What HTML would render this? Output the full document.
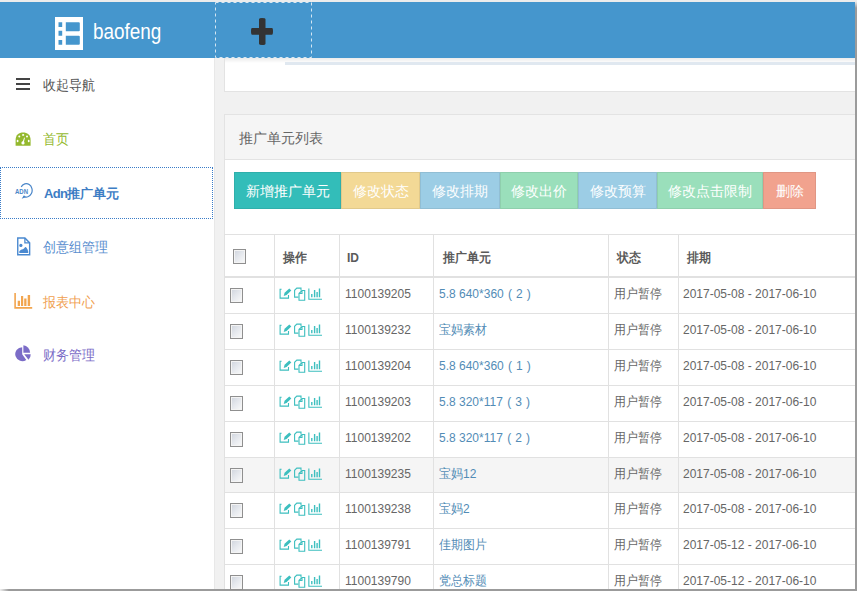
<!DOCTYPE html>
<html><head><meta charset="utf-8">
<style>
*{margin:0;padding:0;box-sizing:border-box}
html,body{width:857px;height:591px;overflow:hidden;background:#fff;font-family:"Liberation Sans",sans-serif;color:#666}
div,svg{position:absolute}
.t13{font-size:13px;line-height:16px;white-space:nowrap}
.t12{font-size:12px;line-height:14px;white-space:nowrap}
.sy{transform:scaleY(1.1);transform-origin:0 9px}
.sc{transform:scaleY(1.09);transform-origin:0 12px}
.sc13{transform:scaleY(1.08);transform-origin:0 13px}
.t14{font-size:14px;line-height:16px;white-space:nowrap}
.btn{top:172px;height:37px;color:#fff;font-size:14px;line-height:39px;text-align:center;white-space:nowrap;box-shadow:inset 0 0 0 1px rgba(0,0,0,0.07)}
.cb{width:13px;height:15px;border:1px solid #8f8f8f;box-shadow:inset 0 0 0 1px #f4f4f4;background:linear-gradient(135deg,#cfd4dd 0%,#e6e9ee 50%,#fafafa 100%)}
.hl{height:1px;background:#e1e1e1}
.vl{width:1px;background:#e1e1e1}
</style></head><body>

<div style="left:0;top:0;width:857px;height:2px;background:#ececec"></div>
<div style="left:0;top:2px;width:855px;height:56px;background:#4596cd"></div>
<svg style="left:55px;top:17px" width="28" height="33" viewBox="0 0 28 33"><path fill="#fff" fill-rule="evenodd" d="M0 0H28V33H0Z M3.5 5.3H7.2V9.9H3.5Z M3.5 13.8H7.2V18.8H3.5Z M3.5 23.1H7.2V27.7H3.5Z M10.8 5.3H23.8Q24.8 5.3 24.8 6.3V13.2Q24.8 14.2 23.8 14.2H10.8Z M10.8 18.8H23.8Q24.8 18.8 24.8 19.8V26.7Q24.8 27.7 23.8 27.7H10.8Z"/></svg>
<div style="left:93px;top:18.5px;font-size:22px;line-height:26px;color:#fff;transform:scaleX(0.86);transform-origin:0 0">baofeng</div>
<svg style="left:0;top:0" width="857" height="60"><rect x="215.5" y="2.5" width="96" height="55" fill="none" stroke="#d5e6f2" stroke-width="1" stroke-dasharray="3 3"/></svg>
<svg style="left:251px;top:18px" width="22" height="27" viewBox="0 0 22 27"><path fill="#333" d="M8 1.2Q8 0 11 0Q14.5 0 14.5 1.2V10H21Q22 10 22 13.3Q22 16.7 21 16.7H14.5V25.8Q14.5 27 11 27Q8 27 8 25.8V16.7H1Q0 16.7 0 13.3Q0 10 1 10H8Z"/></svg>
<div style="left:855px;top:2px;width:2px;height:589px;background:linear-gradient(#e6e6e6 0px,#9b9b9b 6px,#9b9b9b 100%)"></div>
<div style="left:0;top:589px;width:857px;height:2px;background:linear-gradient(90deg,#f0f0f0 0px,#9b9b9b 9px,#9b9b9b 100%)"></div>
<div style="left:214px;top:58px;width:641px;height:531px;background:#f1f1f1;border-left:1px solid #e8e8e8"></div>
<div style="left:224px;top:58px;width:631px;height:34px;background:#fff;border-left:1px solid #e3e3e3;border-bottom:1px solid #e3e3e3"></div>
<div style="left:225px;top:58px;width:630px;height:5px;background:linear-gradient(#ebebeb,#fff)"></div>
<div style="left:285px;top:62px;width:570px;height:3px;background:#e0e8f0"></div>
<div style="left:224px;top:114px;width:631px;height:475px;background:#fff;border:1px solid #e3e3e3;border-right:none;border-bottom:none"></div>
<div style="left:225px;top:115px;width:630px;height:45px;background:#f5f5f5;border-bottom:1px solid #e3e3e3"></div>
<div class="t14" style="left:239px;top:130px;color:#666">推广单元列表</div>
<div class="btn" style="left:234px;width:107px;background:#33bdb9">新增推广单元</div>
<div class="btn" style="left:341px;width:79px;background:#f3d996">修改状态</div>
<div class="btn" style="left:420px;width:80px;background:#9ccde5">修改排期</div>
<div class="btn" style="left:500px;width:78px;background:#9adfbb">修改出价</div>
<div class="btn" style="left:578px;width:79px;background:#9ccde5">修改预算</div>
<div class="btn" style="left:657px;width:106px;background:#9adfbb">修改点击限制</div>
<div class="btn" style="left:763px;width:53px;background:#f1a28e">删除</div>
<div style="left:225px;top:458px;width:630px;height:34px;background:#f5f5f5"></div>
<div class="hl" style="left:224px;top:234px;width:631px"></div>
<div class="hl" style="left:224px;top:313px;width:631px"></div>
<div class="hl" style="left:224px;top:349px;width:631px"></div>
<div class="hl" style="left:224px;top:385px;width:631px"></div>
<div class="hl" style="left:224px;top:421px;width:631px"></div>
<div class="hl" style="left:224px;top:457px;width:631px"></div>
<div class="hl" style="left:224px;top:492px;width:631px"></div>
<div class="hl" style="left:224px;top:528px;width:631px"></div>
<div class="hl" style="left:224px;top:564px;width:631px"></div>
<div class="hl" style="left:224px;top:276px;width:631px;height:2px"></div>
<div class="vl" style="left:224px;top:234px;height:355px"></div>
<div class="vl" style="left:274px;top:234px;height:355px"></div>
<div class="vl" style="left:339px;top:234px;height:355px"></div>
<div class="vl" style="left:433px;top:234px;height:355px"></div>
<div class="vl" style="left:608px;top:234px;height:355px"></div>
<div class="vl" style="left:678px;top:234px;height:355px"></div>
<div class="cb" style="left:233px;top:249px"></div>
<div class="t12 sc" style="left:283px;top:251px;font-weight:bold;color:#5a5a5a">操作</div>
<div class="t12 sc" style="left:347px;top:251px;font-weight:bold;color:#5a5a5a">ID</div>
<div class="t12 sc" style="left:443px;top:251px;font-weight:bold;color:#5a5a5a">推广单元</div>
<div class="t12 sc" style="left:617px;top:251px;font-weight:bold;color:#5a5a5a">状态</div>
<div class="t12 sc" style="left:687px;top:251px;font-weight:bold;color:#5a5a5a">排期</div>
<div class="cb" style="left:230px;top:288px"></div>
<svg style="left:274px;top:278px" width="60" height="35" viewBox="0 0 60 35"><path d="M7.6 11.2H6.1V20.1H14.5V17" fill="none" stroke="#3dbfbf" stroke-width="1.1"/><path d="M10.6 14.8L15.3 10.5L17.3 12.6L12.6 17L9.7 17.9Z" fill="#3dbfbf"/><path d="M27 12.6V10.1H22.8L20.6 12.3V19.1H24.4" fill="none" stroke="#3dbfbf" stroke-width="1.1"/><path d="M25 15.5L28 12.5H30.7V22.2H25Z M25 15.5H28V12.5" fill="none" stroke="#3dbfbf" stroke-width="1.1"/><path d="M34.85 10.5V21.2H48" fill="none" stroke="#3dbfbf" stroke-width="1.1"/><path d="M37.1 16.1H38.5V19.2H37.1Z M39.9 11.9H41.3V19.2H39.9Z M42.4 14H43.8V19.2H42.4Z M44.8 10.5H46.2V19.2H44.8Z" fill="#3dbfbf"/></svg>
<div class="t12 sy" style="left:345px;top:287px">1100139205</div>
<div class="t12 sc" style="left:439px;top:287px;color:#528cb6">5.8 640*360 <span style='margin-left:1px;word-spacing:0.7px'>( 2 )</span></div>
<div class="t12 sc" style="left:614px;top:287px">用户暂停</div>
<div class="t12 sy" style="left:683px;top:287px">2017-05-08 - 2017-06-10</div>
<div class="cb" style="left:230px;top:324px"></div>
<svg style="left:274px;top:314px" width="60" height="35" viewBox="0 0 60 35"><path d="M7.6 11.2H6.1V20.1H14.5V17" fill="none" stroke="#3dbfbf" stroke-width="1.1"/><path d="M10.6 14.8L15.3 10.5L17.3 12.6L12.6 17L9.7 17.9Z" fill="#3dbfbf"/><path d="M27 12.6V10.1H22.8L20.6 12.3V19.1H24.4" fill="none" stroke="#3dbfbf" stroke-width="1.1"/><path d="M25 15.5L28 12.5H30.7V22.2H25Z M25 15.5H28V12.5" fill="none" stroke="#3dbfbf" stroke-width="1.1"/><path d="M34.85 10.5V21.2H48" fill="none" stroke="#3dbfbf" stroke-width="1.1"/><path d="M37.1 16.1H38.5V19.2H37.1Z M39.9 11.9H41.3V19.2H39.9Z M42.4 14H43.8V19.2H42.4Z M44.8 10.5H46.2V19.2H44.8Z" fill="#3dbfbf"/></svg>
<div class="t12 sy" style="left:345px;top:323px">1100139232</div>
<div class="t12 sc" style="left:439px;top:323px;color:#528cb6">宝妈素材</div>
<div class="t12 sc" style="left:614px;top:323px">用户暂停</div>
<div class="t12 sy" style="left:683px;top:323px">2017-05-08 - 2017-06-10</div>
<div class="cb" style="left:230px;top:360px"></div>
<svg style="left:274px;top:350px" width="60" height="35" viewBox="0 0 60 35"><path d="M7.6 11.2H6.1V20.1H14.5V17" fill="none" stroke="#3dbfbf" stroke-width="1.1"/><path d="M10.6 14.8L15.3 10.5L17.3 12.6L12.6 17L9.7 17.9Z" fill="#3dbfbf"/><path d="M27 12.6V10.1H22.8L20.6 12.3V19.1H24.4" fill="none" stroke="#3dbfbf" stroke-width="1.1"/><path d="M25 15.5L28 12.5H30.7V22.2H25Z M25 15.5H28V12.5" fill="none" stroke="#3dbfbf" stroke-width="1.1"/><path d="M34.85 10.5V21.2H48" fill="none" stroke="#3dbfbf" stroke-width="1.1"/><path d="M37.1 16.1H38.5V19.2H37.1Z M39.9 11.9H41.3V19.2H39.9Z M42.4 14H43.8V19.2H42.4Z M44.8 10.5H46.2V19.2H44.8Z" fill="#3dbfbf"/></svg>
<div class="t12 sy" style="left:345px;top:359px">1100139204</div>
<div class="t12 sc" style="left:439px;top:359px;color:#528cb6">5.8 640*360 <span style='margin-left:1px;word-spacing:0.7px'>( 1 )</span></div>
<div class="t12 sc" style="left:614px;top:359px">用户暂停</div>
<div class="t12 sy" style="left:683px;top:359px">2017-05-08 - 2017-06-10</div>
<div class="cb" style="left:230px;top:396px"></div>
<svg style="left:274px;top:386px" width="60" height="35" viewBox="0 0 60 35"><path d="M7.6 11.2H6.1V20.1H14.5V17" fill="none" stroke="#3dbfbf" stroke-width="1.1"/><path d="M10.6 14.8L15.3 10.5L17.3 12.6L12.6 17L9.7 17.9Z" fill="#3dbfbf"/><path d="M27 12.6V10.1H22.8L20.6 12.3V19.1H24.4" fill="none" stroke="#3dbfbf" stroke-width="1.1"/><path d="M25 15.5L28 12.5H30.7V22.2H25Z M25 15.5H28V12.5" fill="none" stroke="#3dbfbf" stroke-width="1.1"/><path d="M34.85 10.5V21.2H48" fill="none" stroke="#3dbfbf" stroke-width="1.1"/><path d="M37.1 16.1H38.5V19.2H37.1Z M39.9 11.9H41.3V19.2H39.9Z M42.4 14H43.8V19.2H42.4Z M44.8 10.5H46.2V19.2H44.8Z" fill="#3dbfbf"/></svg>
<div class="t12 sy" style="left:345px;top:395px">1100139203</div>
<div class="t12 sc" style="left:439px;top:395px;color:#528cb6">5.8 320*117 <span style='margin-left:1px;word-spacing:0.7px'>( 3 )</span></div>
<div class="t12 sc" style="left:614px;top:395px">用户暂停</div>
<div class="t12 sy" style="left:683px;top:395px">2017-05-08 - 2017-06-10</div>
<div class="cb" style="left:230px;top:432px"></div>
<svg style="left:274px;top:422px" width="60" height="35" viewBox="0 0 60 35"><path d="M7.6 11.2H6.1V20.1H14.5V17" fill="none" stroke="#3dbfbf" stroke-width="1.1"/><path d="M10.6 14.8L15.3 10.5L17.3 12.6L12.6 17L9.7 17.9Z" fill="#3dbfbf"/><path d="M27 12.6V10.1H22.8L20.6 12.3V19.1H24.4" fill="none" stroke="#3dbfbf" stroke-width="1.1"/><path d="M25 15.5L28 12.5H30.7V22.2H25Z M25 15.5H28V12.5" fill="none" stroke="#3dbfbf" stroke-width="1.1"/><path d="M34.85 10.5V21.2H48" fill="none" stroke="#3dbfbf" stroke-width="1.1"/><path d="M37.1 16.1H38.5V19.2H37.1Z M39.9 11.9H41.3V19.2H39.9Z M42.4 14H43.8V19.2H42.4Z M44.8 10.5H46.2V19.2H44.8Z" fill="#3dbfbf"/></svg>
<div class="t12 sy" style="left:345px;top:431px">1100139202</div>
<div class="t12 sc" style="left:439px;top:431px;color:#528cb6">5.8 320*117 <span style='margin-left:1px;word-spacing:0.7px'>( 2 )</span></div>
<div class="t12 sc" style="left:614px;top:431px">用户暂停</div>
<div class="t12 sy" style="left:683px;top:431px">2017-05-08 - 2017-06-10</div>
<div class="cb" style="left:230px;top:468px"></div>
<svg style="left:274px;top:458px" width="60" height="35" viewBox="0 0 60 35"><path d="M7.6 11.2H6.1V20.1H14.5V17" fill="none" stroke="#3dbfbf" stroke-width="1.1"/><path d="M10.6 14.8L15.3 10.5L17.3 12.6L12.6 17L9.7 17.9Z" fill="#3dbfbf"/><path d="M27 12.6V10.1H22.8L20.6 12.3V19.1H24.4" fill="none" stroke="#3dbfbf" stroke-width="1.1"/><path d="M25 15.5L28 12.5H30.7V22.2H25Z M25 15.5H28V12.5" fill="none" stroke="#3dbfbf" stroke-width="1.1"/><path d="M34.85 10.5V21.2H48" fill="none" stroke="#3dbfbf" stroke-width="1.1"/><path d="M37.1 16.1H38.5V19.2H37.1Z M39.9 11.9H41.3V19.2H39.9Z M42.4 14H43.8V19.2H42.4Z M44.8 10.5H46.2V19.2H44.8Z" fill="#3dbfbf"/></svg>
<div class="t12 sy" style="left:345px;top:467px">1100139235</div>
<div class="t12 sc" style="left:439px;top:467px;color:#528cb6">宝妈12</div>
<div class="t12 sc" style="left:614px;top:467px">用户暂停</div>
<div class="t12 sy" style="left:683px;top:467px">2017-05-08 - 2017-06-10</div>
<div class="cb" style="left:230px;top:503px"></div>
<svg style="left:274px;top:493px" width="60" height="35" viewBox="0 0 60 35"><path d="M7.6 11.2H6.1V20.1H14.5V17" fill="none" stroke="#3dbfbf" stroke-width="1.1"/><path d="M10.6 14.8L15.3 10.5L17.3 12.6L12.6 17L9.7 17.9Z" fill="#3dbfbf"/><path d="M27 12.6V10.1H22.8L20.6 12.3V19.1H24.4" fill="none" stroke="#3dbfbf" stroke-width="1.1"/><path d="M25 15.5L28 12.5H30.7V22.2H25Z M25 15.5H28V12.5" fill="none" stroke="#3dbfbf" stroke-width="1.1"/><path d="M34.85 10.5V21.2H48" fill="none" stroke="#3dbfbf" stroke-width="1.1"/><path d="M37.1 16.1H38.5V19.2H37.1Z M39.9 11.9H41.3V19.2H39.9Z M42.4 14H43.8V19.2H42.4Z M44.8 10.5H46.2V19.2H44.8Z" fill="#3dbfbf"/></svg>
<div class="t12 sy" style="left:345px;top:502px">1100139238</div>
<div class="t12 sc" style="left:439px;top:502px;color:#528cb6">宝妈2</div>
<div class="t12 sc" style="left:614px;top:502px">用户暂停</div>
<div class="t12 sy" style="left:683px;top:502px">2017-05-08 - 2017-06-10</div>
<div class="cb" style="left:230px;top:539px"></div>
<svg style="left:274px;top:529px" width="60" height="35" viewBox="0 0 60 35"><path d="M7.6 11.2H6.1V20.1H14.5V17" fill="none" stroke="#3dbfbf" stroke-width="1.1"/><path d="M10.6 14.8L15.3 10.5L17.3 12.6L12.6 17L9.7 17.9Z" fill="#3dbfbf"/><path d="M27 12.6V10.1H22.8L20.6 12.3V19.1H24.4" fill="none" stroke="#3dbfbf" stroke-width="1.1"/><path d="M25 15.5L28 12.5H30.7V22.2H25Z M25 15.5H28V12.5" fill="none" stroke="#3dbfbf" stroke-width="1.1"/><path d="M34.85 10.5V21.2H48" fill="none" stroke="#3dbfbf" stroke-width="1.1"/><path d="M37.1 16.1H38.5V19.2H37.1Z M39.9 11.9H41.3V19.2H39.9Z M42.4 14H43.8V19.2H42.4Z M44.8 10.5H46.2V19.2H44.8Z" fill="#3dbfbf"/></svg>
<div class="t12 sy" style="left:345px;top:538px">1100139791</div>
<div class="t12 sc" style="left:439px;top:538px;color:#528cb6">佳期图片</div>
<div class="t12 sc" style="left:614px;top:538px">用户暂停</div>
<div class="t12 sy" style="left:683px;top:538px">2017-05-12 - 2017-06-10</div>
<div class="cb" style="left:230px;top:575px"></div>
<svg style="left:274px;top:565px" width="60" height="35" viewBox="0 0 60 35"><path d="M7.6 11.2H6.1V20.1H14.5V17" fill="none" stroke="#3dbfbf" stroke-width="1.1"/><path d="M10.6 14.8L15.3 10.5L17.3 12.6L12.6 17L9.7 17.9Z" fill="#3dbfbf"/><path d="M27 12.6V10.1H22.8L20.6 12.3V19.1H24.4" fill="none" stroke="#3dbfbf" stroke-width="1.1"/><path d="M25 15.5L28 12.5H30.7V22.2H25Z M25 15.5H28V12.5" fill="none" stroke="#3dbfbf" stroke-width="1.1"/><path d="M34.85 10.5V21.2H48" fill="none" stroke="#3dbfbf" stroke-width="1.1"/><path d="M37.1 16.1H38.5V19.2H37.1Z M39.9 11.9H41.3V19.2H39.9Z M42.4 14H43.8V19.2H42.4Z M44.8 10.5H46.2V19.2H44.8Z" fill="#3dbfbf"/></svg>
<div class="t12 sy" style="left:345px;top:574px">1100139790</div>
<div class="t12 sc" style="left:439px;top:574px;color:#528cb6">党总标题</div>
<div class="t12 sc" style="left:614px;top:574px">用户暂停</div>
<div class="t12 sy" style="left:683px;top:574px">2017-05-12 - 2017-06-10</div>
<svg style="left:16px;top:78px" width="14" height="13" viewBox="0 0 14 13"><path fill="#444" d="M0 0H14V2H0Z M0 5H14V7H0Z M0 10H14V12H0Z"/></svg>
<div class="t13 sc13" style="left:43px;top:78px;color:#555">收起导航</div>
<svg style="left:15px;top:132px" width="17" height="15" viewBox="0 0 17 15"><path fill="#94b92e" d="M0.6 13.7V8C0.6 3 4 0.6 8.1 0.6C12.2 0.6 15.6 3 15.6 8V13.7Z"/><g fill="#fff"><ellipse cx="8.15" cy="2.9" rx="1.1" ry="0.9"/><circle cx="4.3" cy="4.6" r="1"/><circle cx="12" cy="4.6" r="1"/><ellipse cx="2.6" cy="9" rx="0.9" ry="1.2"/><ellipse cx="13.7" cy="9" rx="0.9" ry="1.2"/><circle cx="8" cy="10.9" r="1.6"/><path d="M7.3 10.7L9.2 5.6L9.9 5.8L8.7 11Z"/></g></svg>
<div class="t13 sc13" style="left:43px;top:132px;color:#94b92e">首页</div>
<div style="left:0;top:167px;width:213px;height:52px;border:1px dotted #3a7cc8"></div>
<svg style="left:14px;top:183px" width="20" height="17" viewBox="0 0 20 17"><path d="M7.2 3.9A5.9 6.7 0 1 1 9.5 13.3" fill="none" stroke="#4a86c9" stroke-width="1.2"/><path d="M10 12.3L7.6 15.8L11.8 14.2Z" fill="#4a86c9"/><text x="1" y="10.6" font-size="7.6" font-family="Liberation Sans" fill="#4a86c9" font-weight="bold" textLength="13" lengthAdjust="spacingAndGlyphs">ADN</text></svg>
<div class="t13" style="left:44px;top:186px;color:#3d7dc4;font-weight:bold"><span style="letter-spacing:-0.7px">Adn</span>推广单元</div>
<svg style="left:16px;top:237px" width="15" height="19" viewBox="0 0 15 19"><path d="M1.75 0.95H8.9L13.65 5.9V17.75H1.75Z" fill="none" stroke="#4a89d0" stroke-width="1.4" stroke-linejoin="miter"/><path d="M8.9 0.95V5.9H13.65" fill="none" stroke="#4a89d0" stroke-width="1.3"/><circle cx="4.9" cy="8.4" r="1.6" fill="#4a89d0"/><path d="M3.3 16H12.2V14.5Q11 10 9.2 10Q8 12 6.8 12.3Q5 12.5 3.3 14.2Z" fill="#4a89d0"/></svg>
<div class="t13 sc13" style="left:43px;top:240px;color:#5b8fcf">创意组管理</div>
<svg style="left:14px;top:292px" width="19" height="17" viewBox="0 0 19 17"><path d="M1.1 0.9V15.9H18.2" fill="none" stroke="#f2a54e" stroke-width="1.6"/><path d="M3.7 8.8H6V13.9H3.7Z M7 4.1H9.2V13.9H7Z M10.2 6.4H12.5V13.9H10.2Z M13.7 3.1H16.1V13.9H13.7Z" fill="#f2a54e"/></svg>
<div class="t13 sc13" style="left:43px;top:295px;color:#f0a050">报表中心</div>
<svg style="left:15px;top:345px" width="16" height="18" viewBox="0 0 16 18"><g fill="#7b6cc7"><path d="M7.2 2.2V9.3L11.3 14.9A7 7 0 1 1 7.2 2.2Z"/><path d="M8.4 0.3V7.8H15.1A7.2 7.5 0 0 0 8.4 0.3Z"/><path d="M9.2 9.2H15.7A7 7 0 0 1 13.5 14.7Z"/></g></svg>
<div class="t13 sc13" style="left:43px;top:348px;color:#7b6cc7">财务管理</div>
</body></html>
